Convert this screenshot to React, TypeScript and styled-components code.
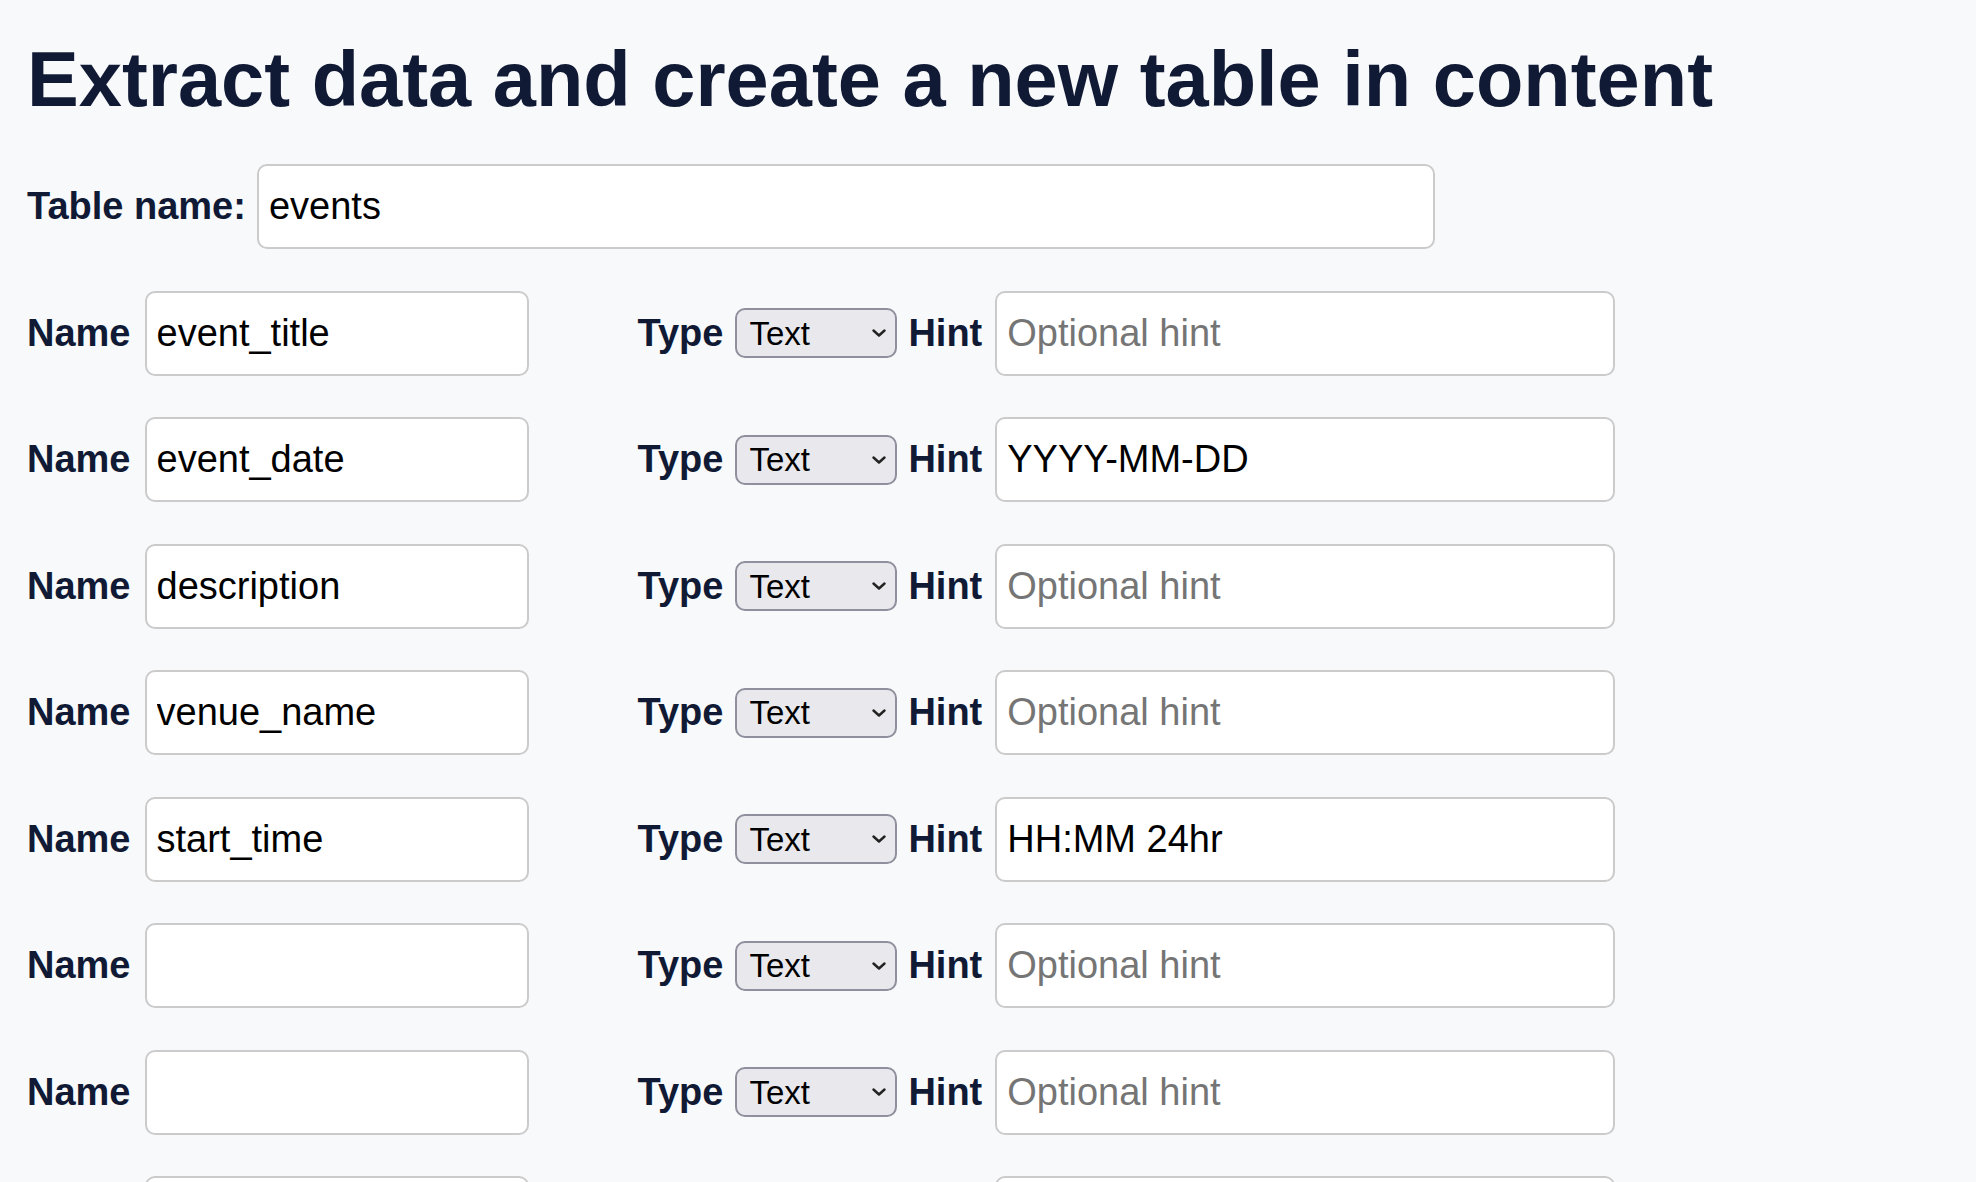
import React from "react";
import styled, { createGlobalStyle } from "styled-components";

const GlobalStyle = createGlobalStyle`
  body {
    margin: 0;
    background: #f8f9fb;
    font-family: "Liberation Sans", Helvetica, Arial, sans-serif;
  }
`;

const Page = styled.div`
  padding: 0 0 0 27px;
  height: 1182px;
  box-sizing: border-box;
  overflow: hidden;
`;

const Title = styled.h1`
  margin: 33px 0 39px;
  font-size: 77.6px;
  line-height: 92px;
  font-weight: 700;
  color: #111a35;
  white-space: nowrap;
`;

const Row = styled.div`
  display: flex;
  align-items: center;
  margin-bottom: 41.5px;
`;

const Label = styled.label<{ $before?: number; $after?: number }>`
  font-size: 38px;
  font-weight: 700;
  color: #111a35;
  margin-left: ${(p) => p.$before ?? 0}px;
  margin-right: ${(p) => p.$after ?? 12}px;
  white-space: nowrap;
`;

const TextInput = styled.input<{ $width: number }>`
  box-sizing: border-box;
  width: ${(p) => p.$width}px;
  height: 85px;
  padding: 0 10px;
  border: 2px solid #cbcbcb;
  border-radius: 10px;
  background: #fff;
  font-family: inherit;
  font-size: 38px;
  color: #000;
  outline: none;

  &::placeholder {
    color: #757575;
  }
`;

const SelectWrap = styled.div`
  position: relative;
  margin-right: 11px;
`;

const Select = styled.select`
  appearance: none;
  box-sizing: border-box;
  width: 162px;
  height: 50px;
  padding: 0 0 0 12px;
  border: 2px solid #8f8f9d;
  border-radius: 10px;
  background: #e9e9ed;
  font-family: inherit;
  font-size: 33px;
  color: #000;
  display: block;
`;

const Chevron = styled.svg`
  position: absolute;
  right: 11px;
  top: 21px;
  pointer-events: none;
`;

type Field = { name: string; hint: string };

const fields: Field[] = [
  { name: "event_title", hint: "" },
  { name: "event_date", hint: "YYYY-MM-DD" },
  { name: "description", hint: "" },
  { name: "venue_name", hint: "" },
  { name: "start_time", hint: "HH:MM 24hr" },
  { name: "", hint: "" },
  { name: "", hint: "" },
  { name: "", hint: "" },
];

const App: React.FC = () => {
  return (
    <Page>
      <GlobalStyle />
      <Title>Extract data and create a new table in content</Title>
      <Row>
        <Label $after={11}>Table name:</Label>
        <TextInput $width={1178} defaultValue="events" />
      </Row>
      {fields.map((f, i) => (
        <Row key={i}>
          <Label $after={14}>Name</Label>
          <TextInput $width={384} defaultValue={f.name} />
          <Label $before={109}>Type</Label>
          <SelectWrap>
            <Select defaultValue="text">
              <option value="text">Text</option>
              <option value="integer">Integer</option>
              <option value="float">Float</option>
            </Select>
            <Chevron width="14" height="8" viewBox="0 0 14 8">
              <path d="M1.5 1.5 L7 6.5 L12.5 1.5" fill="none" stroke="#222" strokeWidth="2.4" strokeLinecap="round" strokeLinejoin="round" />
            </Chevron>
          </SelectWrap>
          <Label $after={13}>Hint</Label>
          <TextInput $width={620} defaultValue={f.hint} placeholder="Optional hint" />
        </Row>
      ))}
    </Page>
  );
};

export default App;
